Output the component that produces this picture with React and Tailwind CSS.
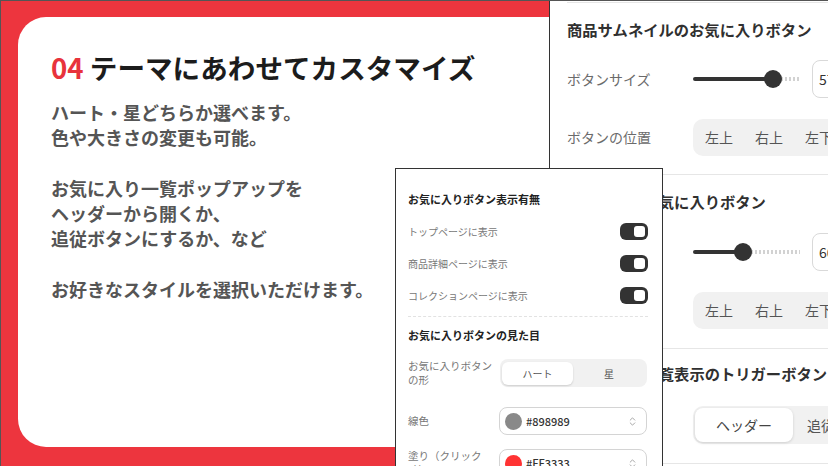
import React from "react";
import { ChevronsUpDown } from "lucide-react";

function Slider({ pct }) {
  return (
    <div className="relative flex h-[18px] w-[107px] shrink-0 items-center">
      <div className="h-[4px] rounded-l-full bg-[#333]" style={{ width: pct + "%" }} />
      <div className="h-[4px] flex-1 bg-[repeating-linear-gradient(90deg,#d2d2d2_0_2px,transparent_2px_4px)]" />
      <div
        className="absolute top-0 -ml-[9px] h-[18px] w-[18px] rounded-full bg-[#333]"
        style={{ left: pct + "%" }}
      />
    </div>
  );
}

function SizeRow({ pct, value }) {
  return (
    <div className="flex h-[38px] items-center">
      <div className="w-[126px] shrink-0 whitespace-nowrap text-[14px] text-[#6b6b6b]">ボタンサイズ</div>
      <Slider pct={pct} />
      <div className="ml-[12px] flex h-[38px] w-[60px] shrink-0 items-center rounded-[8px] border border-[#d9d9d9] pl-[6px] text-[14px] text-[#333]">
        {value}
      </div>
    </div>
  );
}

function PositionRow() {
  return (
    <div className="flex h-[38px] items-center">
      <div className="w-[126px] shrink-0 whitespace-nowrap text-[14px] text-[#6b6b6b]">ボタンの位置</div>
      <div className="flex h-[37px] shrink-0 items-center whitespace-nowrap rounded-[10px] bg-[#f1f1f1] px-[1px] text-[14px] text-[#555]">
        <span className="px-[11px]">左上</span>
        <span className="px-[11px]">右上</span>
        <span className="px-[11px]">左下</span>
        <span className="px-[11px]">右下</span>
      </div>
    </div>
  );
}

function Toggle() {
  return (
    <div className="flex h-[17px] w-[28px] shrink-0 items-center justify-end rounded-[6px] bg-[#333] pr-[3px]">
      <div className="h-[11px] w-[11px] rounded-[3px] bg-white" />
    </div>
  );
}

function ToggleRow({ label }) {
  return (
    <div className="flex h-[32px] items-center justify-between">
      <span className="text-[10px] text-[#777]">{label}</span>
      <Toggle />
    </div>
  );
}

function ColorSelect({ color, value }) {
  return (
    <div className="flex h-[28px] w-[148px] shrink-0 items-center rounded-[8px] border border-[#d4d4d4] bg-white pl-[5px] pr-[8px]">
      <div className="h-[17px] w-[17px] rounded-full" style={{ backgroundColor: color }} />
      <span className="ml-[4px] flex-1 text-[11px] font-medium text-[#333]">{value}</span>
      <ChevronsUpDown size={11} strokeWidth={1.6} className="text-[#888]" />
    </div>
  );
}

export default function App() {
  return (
    <div className="relative h-[466px] w-[828px] overflow-hidden border-l border-t border-[#555] bg-[#ED353E] font-['Noto_Sans_CJK_JP',sans-serif]">
      {/* slide card */}
      <div className="ml-[17px] mt-[16px] h-[430px] w-[600px] rounded-[28px] bg-white pl-[33px] pt-[31px]">
        <h1 className="h-[38px] whitespace-nowrap text-[27.6px] font-bold leading-[38px] text-[#1c1c1c]">
          <span className="text-[#E8333C]">04</span> テーマにあわせてカスタマイズ
        </h1>
        <div className="mt-[14px] text-[18px] font-semibold leading-[25px] text-[#555]">
          <p>
            ハート・星どちらか選べます。
            <br />
            色や大きさの変更も可能。
          </p>
          <p className="mt-[26px]">
            お気に入り一覧ポップアップを
            <br />
            ヘッダーから開くか、
            <br />
            追従ボタンにするか、など
          </p>
          <p className="mt-[26px]">お好きなスタイルを選択いただけます。</p>
        </div>
      </div>

      {/* settings window */}
      <div className="absolute bottom-0 left-[548px] top-0 w-[360px] border-l border-[#333] bg-white pt-[1px]">
        <section className="ml-[17px] border-t border-[#e6e6e6] pb-[18px] pt-[15px]">
          <h2 className="h-[22px] whitespace-nowrap text-[15.3px] font-bold leading-[22px] text-[#303030]">
            商品サムネイルのお気に入りボタン
          </h2>
          <div className="mt-[20px] flex flex-col gap-[20px]">
            <SizeRow pct={74.8} value="57" />
            <PositionRow />
          </div>
        </section>
        <section className="ml-[17px] border-t border-[#e6e6e6] pb-[19px] pt-[15px]">
          <h2 className="h-[22px] whitespace-nowrap text-[15.3px] font-bold leading-[22px] text-[#303030]">
            商品詳細のお気に入りボタン
          </h2>
          <div className="mt-[21px] flex flex-col gap-[20px]">
            <SizeRow pct={46.7} value="60" />
            <PositionRow />
          </div>
        </section>
        <section className="ml-[17px] border-t border-[#e6e6e6] pb-[19px] pt-[13px]">
          <h2 className="h-[22px] whitespace-nowrap text-[15.3px] font-bold leading-[22px] text-[#303030]">
            お気に入り一覧表示のトリガーボタン
          </h2>
          <div className="ml-[126px] mt-[22px] flex h-[38px] w-[200px] items-center rounded-[10px] bg-[#f1f1f1] pl-[2px] text-[14px] text-[#444]">
            <div className="flex h-[34px] w-[98px] shrink-0 items-center justify-center rounded-[8px] bg-white shadow-[0_1px_3px_rgba(0,0,0,0.15)]">
              ヘッダー
            </div>
            <span className="ml-[14px] whitespace-nowrap text-[#555]">追従ボタン</span>
          </div>
        </section>
        <div className="ml-[17px] border-t border-[#e6e6e6]" />
      </div>

      {/* popover panel */}
      <div className="absolute left-[394px] top-[167px] h-[320px] w-[268px] border border-[#333] bg-white pl-[12px] pr-[14px] pt-[22px]">
        <h3 className="h-[16px] text-[11px] font-bold leading-[16px] text-[#222]">お気に入りボタン表示有無</h3>
        <div className="mt-[8px]">
          <ToggleRow label="トップページに表示" />
          <ToggleRow label="商品詳細ページに表示" />
          <ToggleRow label="コレクションページに表示" />
        </div>
        <div className="mt-[5px] border-t border-dashed border-[#e2e2e2]" />
        <h3 className="mt-[10px] h-[16px] text-[11px] font-bold leading-[16px] text-[#222]">お気に入りボタンの見た目</h3>
        <div className="mt-[16px] flex items-start">
          <div className="w-[92px] shrink-0 text-[10.5px] leading-[14px] text-[#777]">
            お気に入りボタン
            <br />
            の形
          </div>
          <div className="flex h-[28px] w-[147px] shrink-0 items-center rounded-[8px] bg-[#f1f1f1] px-[2px] text-[10px] text-[#555]">
            <div className="flex h-[23px] w-[71px] items-center justify-center rounded-[6px] bg-white shadow-[0_1px_2px_rgba(0,0,0,0.15)]">
              ハート
            </div>
            <div className="flex-1 text-center">星</div>
          </div>
        </div>
        <div className="mt-[20px] flex items-center">
          <div className="w-[91px] shrink-0 text-[10.5px] text-[#777]">線色</div>
          <ColorSelect color="#898989" value="#898989" />
        </div>
        <div className="mt-[14px] flex items-start">
          <div className="w-[91px] shrink-0 text-[10.5px] leading-[14px] text-[#777]">
            塗り（クリック
            <br />
            時）
          </div>
          <ColorSelect color="#FF3333" value="#FF3333" />
        </div>
      </div>
    </div>
  );
}
